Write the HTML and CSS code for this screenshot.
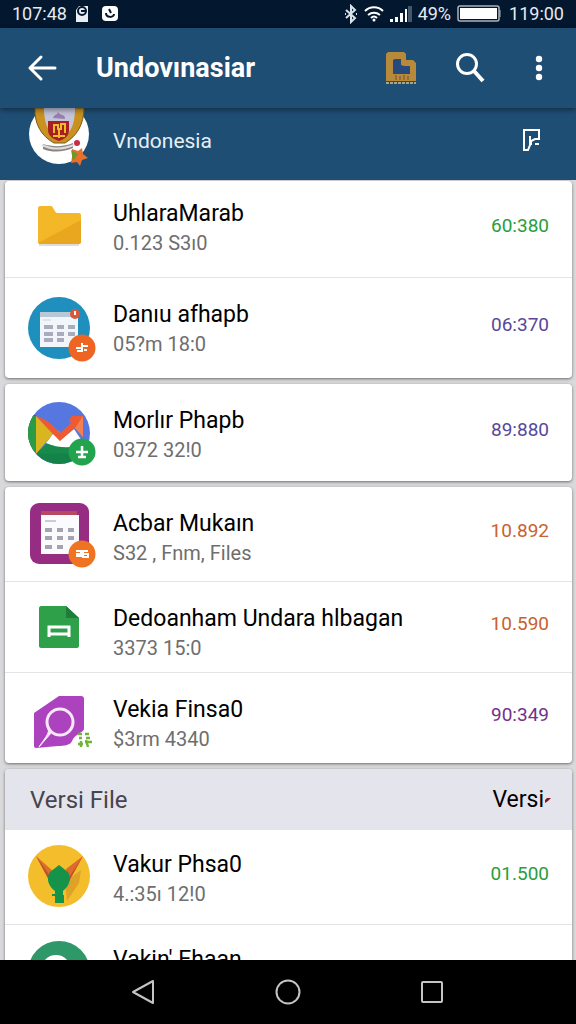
FILE: index.html
```html
<!DOCTYPE html>
<html lang="id">
<head>
    <meta charset="UTF-8">
    <meta name="viewport" content="width=device-width, initial-scale=1.0">
    <title>Undovınasiar</title>
    <link rel="stylesheet" href="styles.css">
</head>
<body>
    <div class="statusbar">
        <span>107:48</span>
        <svg class="notif" width="14" height="18" viewBox="0 0 14 18">
            <path d="M1 5 4 1h9v16H1z" fill="#e8edf2"/>
            <circle cx="7" cy="6" r="4" fill="none" stroke="#03172f" stroke-width="2"/>
            <path d="M6 6h4" stroke="#03172f" stroke-width="2"/>
        </svg>
        <svg width="18" height="18" viewBox="0 0 18 18">
            <rect x="1" y="1" width="16" height="15" rx="4" fill="#fff"/>
            <path d="M5 8c0 5 8 5 8 1M8 4l2 4" fill="none" stroke="#03172f" stroke-width="2"/>
        </svg>
        <div class="system">
            <svg width="14" height="20" viewBox="0 0 14 20" fill="none" stroke="#dbe3ea" stroke-width="2">
                <path d="m2 6 9 8-4 4V2l4 4-9 8M1 10h1M12 10h1"/>
            </svg>
            <svg width="20" height="18" viewBox="0 0 20 18" fill="none" stroke="#fff" stroke-width="2">
                <path d="M1 6c5-5 13-5 18 0M4 10c4-3 8-3 12 0M7 13c2-2 4-2 6 0"/>
                <circle cx="10" cy="15" r="1.5" fill="#fff" stroke="none"/>
            </svg>
            <svg width="22" height="18" viewBox="0 0 22 18" fill="#fff">
                <path d="M0 14h3v3H0zM5 12h3v5H5zM10 8h3v9h-3zM15 4h2v13h-2z"/>
                <path d="M18 1h4v16h-4z" fill="#42566c"/>
            </svg>
            <span>49%</span>
            <svg class="battery" width="44" height="18" viewBox="0 0 44 18">
                <rect x="1" y="1" width="41" height="15" rx="2" fill="none" stroke="#aab4bf" stroke-width="1.5"/>
                <rect x="3" y="3" width="37" height="11" fill="#fff"/>
                <path d="M43 5v7" stroke="#aab4bf"/>
            </svg>
            <span>119:00</span>
        </div>
    </div>

    <header class="toolbar">
        <button class="icon-btn" aria-label="Kembali">
            <svg width="30" height="28" viewBox="0 0 30 28" fill="none" stroke="#fff" stroke-width="3" stroke-linecap="round" stroke-linejoin="round">
                <path d="M28 14H3M14 3 3 14l11 11"/>
            </svg>
        </button>
        <h1>Undovınasiar</h1>
        <button class="icon-btn" aria-label="Berkas">
            <svg width="30" height="34" viewBox="0 0 30 34">
                <path d="M2 1h16l2 2v6h7l3 3v18H0V3z" fill="#b68a3a"/>
                <path d="M7 9l2-1h6v6l3 1h6v8H7z" fill="#264a7c"/>
                <path d="M10 24v5M14 25v4M18 24v5M22 25v4" stroke="#8a6334" stroke-width="1.5"/>
                <path d="M0 32h30" stroke="#a8a58a" stroke-width="2" stroke-dasharray="3 1"/>
            </svg>
        </button>
        <button class="icon-btn" aria-label="Cari">
            <svg width="30" height="30" viewBox="0 0 30 30" fill="none" stroke="#fff">
                <circle cx="12" cy="11" r="9.5" stroke-width="3"/>
                <path d="m19 18 9 10" stroke-width="4"/>
            </svg>
        </button>
        <button class="icon-btn" aria-label="Menu">
            <svg width="8" height="26" viewBox="0 0 8 26" fill="#fff">
                <circle cx="4" cy="4" r="3.2"/><circle cx="4" cy="13" r="3.2"/><circle cx="4" cy="22" r="3.2"/>
            </svg>
        </button>
    </header>

    <div class="account">
        <svg width="64" height="60" viewBox="0 0 64 60">
            <circle cx="31" cy="26" r="30" fill="#fff"/>
            <path d="M7 0h49c0 16-7 28-19 35H26C13 28 6 15 7 0z" fill="#c9921f" stroke="#7a5a20"/>
            <path d="M16 0h31c0 13-3 22-8 26H25C19 22 16 13 16 0z" fill="#c4c4dc"/>
            <path d="M25 10c2-5 4-2 5-6 3 5 7 1 7 7z" fill="#9a7fae"/>
            <path d="M20 13h21v9c0 6-4 9-10 11-6-2-11-5-11-11z" fill="#a81f20"/>
            <path d="M26 25v-8h4v4h3v-5h4v9M25 28h12M31 21v9" fill="none" stroke="#efb92e" stroke-width="2"/>
            <path d="M15 36c10 3 20 3 30-1v5c-9 4-20 5-30 1z" fill="#8c8382"/>
            <path d="M14 37c10 5 22 4 32 0" fill="none" stroke="#ddd" stroke-width="2"/>
            <circle cx="49" cy="35" r="3" fill="#c72b45"/>
            <path d="m44 41 6 2 4-3 1 6 5 4-6 2-2 6-3-4-6 1 1-6z" fill="#e9702a"/>
            <path d="m43 42 7 4-5 7z" fill="#6b9a2b"/>
        </svg>
        <span class="account-name">Vndonesia</span>
        <button class="icon-btn" aria-label="Buka berkas">
            <svg width="20" height="24" viewBox="0 0 20 24" fill="none" stroke="#fff" stroke-width="2">
                <path d="M9 17v-4l4-2h4V2H2v20h4l2-5V8"/>
                <path d="M13 16h4"/>
            </svg>
        </button>
    </div>

    <main class="list">
        <ul class="card card-folders">
            <li><a href="#" class="row">
                <svg class="icon" viewBox="0 0 64 64">
                    <path d="M11 46h40v3H11z" fill="#ddd"/>
                    <path d="M12 9h11c2 0 4 7 6 7h22c1 0 2 1 2 2v27c0 1-1 2-2 2H12c-1 0-2-1-2-2V11c0-1 1-2 2-2z" fill="#f3b727"/>
                    <path d="M10 46 53 23v22c0 1-1 2-2 2H12z" fill="#e9a720"/>
                </svg>
                <div class="text"><h2>UhlaraMarab</h2><p>0.123 S3ı0</p></div>
                <span class="amount green">60:380</span>
            </a></li>
            <li><a href="#" class="row">
                <svg class="icon" viewBox="0 0 64 64">
                    <circle cx="31" cy="32" r="31" fill="#1f8fbd"/>
                    <path d="M12 16h38v35H12z" fill="#f2f5fa"/>
                    <path d="M12 16h38v5H12z" fill="#b9c8d6"/>
                    <path d="M16 31h9m4 0h7m4 0h7M16 38h9m4 0h7m4 0h7M16 44h9m4 0h7" stroke="#a9acbd" stroke-width="4"/>
                    <path d="M15 24h8" stroke="#ccd2dc"/>
                    <circle cx="47" cy="18" r="5" fill="#d9573a"/>
                    <path d="M47 15v4" stroke="#fff" stroke-width="2"/>
                    <circle cx="54" cy="52" r="13.5" fill="#ee6422"/>
                    <path d="M48 52h6M49 55h5M54 47v9M54 50h6M56 54h3" stroke="#fff" stroke-width="2"/>
                </svg>
                <div class="text"><h2>Danıu afhapb</h2><p>05?m 18:0</p></div>
                <span class="amount violet">06:370</span>
            </a></li>
        </ul>

        <ul class="card card-mail">
            <li><a href="#" class="row">
                <svg class="icon" viewBox="0 0 64 64">
                    <clipPath id="mail-circle"><circle cx="31" cy="32" r="31"/></clipPath>
                    <g clip-path="url(#mail-circle)">
                        <path d="M0 0h64v64H0z" fill="#5677e0"/>
                        <path d="M0 14h8v38l12-8h44v20H0z" fill="#15824a"/>
                        <path d="M0 15h8v37H0z" fill="#2c9b45"/>
                        <path d="M8 15l17 18L8 53z" fill="#d9b51f"/>
                        <path d="M8 53l11-11c12 5 27 6 38 1v9z" fill="#188a4c"/>
                        <path d="M25 33l7 6 14-11 10 15c-12 5-27 4-38-1z" fill="#fff"/>
                        <path d="M8 15l24 16v9z" fill="#f08a3c"/>
                        <path d="M8 15c10 3 16 8 24 17l11-10-2-3 3-4h11v21l-8-9-15 13z" fill="#ee5b32"/>
                        <path d="M55 15v21l-8-9z" fill="#f5804f"/>
                    </g>
                    <circle cx="54" cy="51" r="13.5" fill="#23a34d"/>
                    <path d="M54 45v11M48 51h12M50 56h8" stroke="#fff" stroke-width="2.5"/>
                </svg>
                <div class="text"><h2>Morlır Phapb</h2><p>0372 32!0</p></div>
                <span class="amount violet">89:880</span>
            </a></li>
        </ul>

        <ul class="card card-files">
            <li><a href="#" class="row">
                <svg class="icon" viewBox="0 0 64 64">
                    <rect x="2" y="1" width="59" height="61" rx="9" fill="#962d82"/>
                    <path d="M13 9h36v6H13z" fill="#b8485f"/>
                    <path d="M13 13h38v39H13z" fill="#fbfafc"/>
                    <path d="M17 19h11" stroke="#ccc" stroke-width="2"/>
                    <path d="M17 28h7m5 0h6m5 0h6M17 36h7m5 0h6m5 0h6M17 45h7m5 0h6" stroke="#a4a4b0" stroke-width="4"/>
                    <circle cx="54" cy="52" r="13.5" fill="#ef7321"/>
                    <path d="M48 49h5v5h-5m0-2h4M60 49h-5v6h5v-3h-5" fill="none" stroke="#fff" stroke-width="2"/>
                </svg>
                <div class="text"><h2>Acbar Mukaın</h2><p>S32 , Fnm, Files</p></div>
                <span class="amount orange">10.892</span>
            </a></li>
            <li><a href="#" class="row">
                <svg class="icon" viewBox="0 0 64 64">
                    <path d="M13 11h25l13 12v28c0 1-1 2-2 2H13c-1 0-2-1-2-2V13c0-1 1-2 2-2z" fill="#2fa04a"/>
                    <path d="M38 11l13 12H38z" fill="#1f7d38"/>
                    <path d="M21 42V32h20v10M21 39h20" fill="none" stroke="#fff" stroke-width="3"/>
                </svg>
                <div class="text"><h2>Dedoanham Undara hlbagan</h2><p>3373 15:0</p></div>
                <span class="amount orange">10.590</span>
            </a></li>
            <li><a href="#" class="row">
                <svg class="icon" viewBox="0 0 64 64">
                    <path d="M31 10h22c2 0 3 1 3 3v30c0 3-9 5-12 12-1 4-8 5-14 5L8 62c-1 0-2-1-2-2V27z" fill="#ad42be"/>
                    <circle cx="32" cy="36" r="13" fill="none" stroke="#f8e9fa" stroke-width="3"/>
                    <path d="M20 43c2 4-4 10-9 18l13-15z" fill="#f8e9fa" stroke="#f8e9fa"/>
                    <path d="M50 48h4m3 0h4M51 52h3m4 0h4M50 58h5m2-2h7M53 55v6M58 54l2 7" stroke="#72b33d" stroke-width="2.5"/>
                </svg>
                <div class="text"><h2>Vekia Finsa0</h2><p>$3rm 4340</p></div>
                <span class="amount purple">90:349</span>
            </a></li>
        </ul>

        <section class="card card-versions">
            <div class="section-head">
                <h3>Versi File</h3>
                <button>Versi<svg width="7" height="8" viewBox="0 0 7 8"><path d="M1 7V4l2-2h4L4 5z" fill="#8a1520"/></svg></button>
            </div>
            <ul>
                <li><a href="#" class="row">
                    <svg class="icon" viewBox="0 0 64 64">
                        <circle cx="31" cy="31" r="31" fill="#f4bd2b"/>
                        <path d="M39 56l12-18 2-13-16 12z" fill="#dda226"/>
                        <path d="M8 11l18 16-4 10zM55 11L38 24l2 14z" fill="#de6b2b"/>
                        <path d="M8 11l14 20v6zM55 11L40 34v4z" fill="#b9532b"/>
                        <path d="M31 20l9 7c4 7 1 14-5 19v4h1v8h-9v-8h-3 3v-4c-7-5-9-13-5-19z" fill="#15934a"/>
                        <path d="M24 50h5" stroke="#15934a" stroke-width="2"/>
                    </svg>
                    <div class="text"><h2>Vakur Phsa0</h2><p>4.:35ı 12!0</p></div>
                    <span class="amount green">01.500</span>
                </a></li>
                <li><a href="#" class="row">
                    <svg class="icon" viewBox="0 0 64 64">
                        <circle cx="31" cy="32" r="31" fill="#2f9868"/>
                        <circle cx="28" cy="30" r="15" fill="#fff"/>
                    </svg>
                    <div class="text"><h2>Vakin' Ehaan</h2></div>
                    <span class="amount green">01.000</span>
                </a></li>
            </ul>
        </section>
    </main>

    <nav class="navbar">
        <button aria-label="Kembali">
            <svg width="26" height="26" viewBox="0 0 26 26"><path d="M22 2v22L2 13z"/></svg>
        </button>
        <button aria-label="Beranda">
            <svg width="26" height="26" viewBox="0 0 26 26"><circle cx="13" cy="13" r="11.5"/></svg>
        </button>
        <button aria-label="Aplikasi terkini">
            <svg width="26" height="26" viewBox="0 0 26 26"><rect x="3" y="3" width="20" height="20" rx="1"/></svg>
        </button>
    </nav>
</body>
</html>
```

FILE: styles.css
```css
* {
    box-sizing: border-box;
    margin: 0;
    padding: 0;
}
body {
    display: flex;
    flex-direction: column;
    height: 100vh;
    overflow: hidden;
    font-family: Roboto, "Liberation Sans", sans-serif;
    background: #d9d9db;
}
ul {
    list-style: none;
}
button {
    border: none;
    background: none;
    font: inherit;
    color: inherit;
    cursor: pointer;
}
svg {
    display: block;
    flex-shrink: 0;
}

/* system status bar */
.statusbar {
    display: flex;
    align-items: center;
    height: 28px;
    flex-shrink: 0;
    padding: 0 12px;
    background: #03172f;
    color: #e6ebf0;
    font-size: 18px;
    line-height: 24px;
}
.statusbar .notif {
    margin: 0 12px 0 8px;
}
.system {
    display: flex;
    align-items: center;
    gap: 6px;
    margin-left: auto;
}
.battery {
    margin-right: 2px;
}

/* app bar */
.toolbar {
    display: flex;
    align-items: center;
    height: 80px;
    flex-shrink: 0;
    padding: 0 13px 0 18px;
    background: #1f4e75;
    color: white;
    box-shadow: 0 2px 6px rgba(0,0,0,0.45);
    z-index: 1;
}
.toolbar h1 {
    flex: 1;
    margin-left: 30px;
    font-size: 27px;
    line-height: 36px;
    font-weight: 700;
}
.icon-btn {
    display: flex;
    align-items: center;
    justify-content: center;
    width: 48px;
    height: 48px;
}
.toolbar .icon-btn + .icon-btn {
    margin-left: 21px;
}
.account {
    display: flex;
    height: 72px;
    flex-shrink: 0;
    padding: 0 20px 0 28px;
    background: #1f4e75;
    color: #e8eef4;
}
.account-name {
    flex: 1;
    margin-left: 21px;
    font-size: 21px;
    line-height: 66px;
}
.account .icon-btn {
    height: 64px;
}

/* file list */
.list {
    flex: 1;
    display: flex;
    flex-direction: column;
    gap: 6px;
    min-height: 0;
    overflow: hidden;
    padding: 1px 4px 0 5px;
}
.card {
    flex-shrink: 0;
    background: white;
    border-radius: 4px;
    box-shadow: 0 1px 3px rgba(0,0,0,0.5);
}
li + li {
    border-top: 1px solid #e4e4e6;
}
.row {
    display: flex;
    height: 94px;
    padding: 0 23px;
    color: black;
    text-decoration: none;
}
.card-folders .row {
    height: 96px;
}
.card-folders li + li .row {
    height: 100px;
}
.card-mail .row {
    height: 97px;
}
.card-files li + li .row {
    height: 90px;
}
.icon {
    width: 64px;
    height: 64px;
    align-self: center;
    overflow: visible;
}
.text {
    flex: 1;
    padding: 20px 0 0 21px;
}
.text h2 {
    font-size: 23px;
    line-height: 30px;
    font-weight: 400;
    white-space: nowrap;
}
.text p {
    font-size: 20px;
    line-height: 28px;
    color: #6e6e6e;
}
.card-folders .text {
    padding-top: 18px;
}
.card-folders li + li .text,
.card-mail .text,
.card-files .text {
    padding-top: 22px;
}
.amount {
    align-self: center;
    padding-bottom: 6px;
    font-size: 19px;
    line-height: 24px;
}
.green {
    color: #2a9d3c;
}
.violet {
    color: #57489a;
}
.orange {
    color: #c8622e;
}
.purple {
    color: #76308a;
}
.section-head {
    display: flex;
    align-items: center;
    justify-content: space-between;
    height: 61px;
    padding: 0 21px 0 25px;
    border-radius: 4px 4px 0 0;
    background: #e4e4ec;
    font-size: 23px;
}
.section-head h3 {
    font-size: 24px;
    font-weight: 400;
    color: #45454d;
}
.section-head button {
    display: flex;
    align-items: center;
    color: black;
}

/* system navigation */
.navbar {
    display: flex;
    align-items: center;
    justify-content: center;
    gap: 96px;
    height: 64px;
    flex-shrink: 0;
    background: black;
}
.navbar button {
    display: flex;
    align-items: center;
    justify-content: center;
    width: 48px;
    height: 48px;
}
.navbar svg {
    fill: none;
    stroke: #c4c4c4;
    stroke-width: 2;
    stroke-linejoin: round;
}
```
